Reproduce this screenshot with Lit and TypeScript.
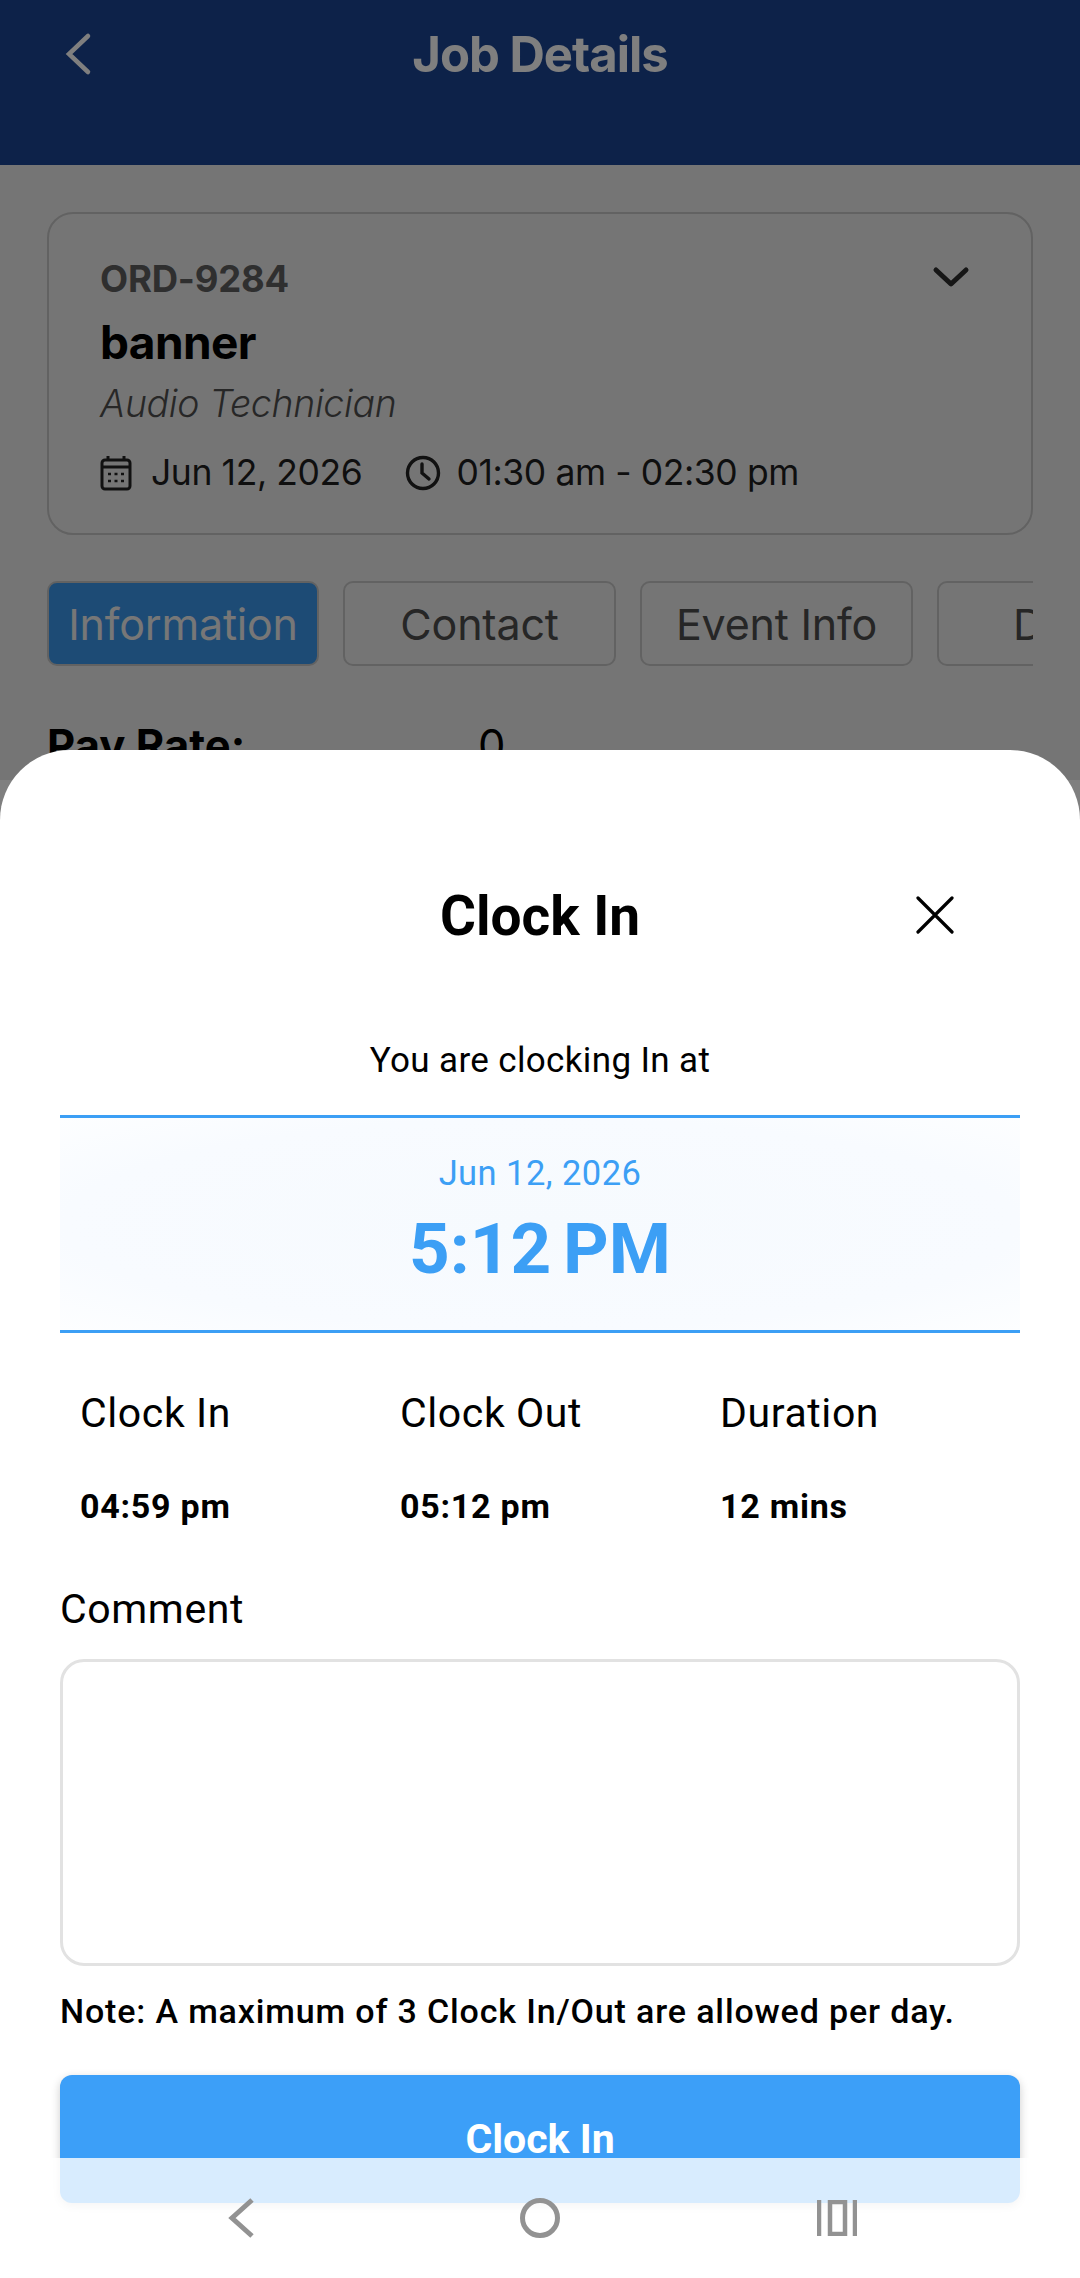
import { LitElement, html, css } from "lit";
import { customElement } from "lit/decorators.js";

@customElement("app-root")
export class AppRoot extends LitElement {
  static styles = css`
    :host { display: block; width: 1080px; height: 2278px; position: relative; overflow: hidden; background: #fff; font-family: Inter, sans-serif; color: #000; }
    * { box-sizing: border-box; }
    .page { height: 780px; overflow: hidden; background: #ebebeb; }
    .header { height: 165px; background: #1a4492; color: #fff; display: flex; position: relative; justify-content: center; }
    .header svg { position: absolute; left: 64px; top: 32px; }
    .title { font-size: 49px; font-weight: 700; line-height: 56px; padding-top: 27px; letter-spacing: -1px; }
    .content { padding: 47px 47px 0; }
    .card { height: 323px; border: 2.5px solid #c4c4c4; border-radius: 26px; padding: 44px 51px 0; position: relative; }
    .card > svg { position: absolute; right: 60px; top: 52px; }
    .ord { font-size: 36.5px; font-weight: 700; color: #5e5e5e; line-height: 42px; letter-spacing: -.2px; }
    .name { font-size: 46px; font-weight: 700; line-height: 56px; margin-top: 14px; letter-spacing: -.6px; }
    .role { font-size: 37.4px; font-style: italic; color: #4f4f4f; line-height: 44px; margin-top: 12px; font-weight: 300; letter-spacing: -.3px; }
    .meta { display: flex; align-items: center; font-size: 35.5px; margin-top: 25px; line-height: 44px; color: #1e1e1e; letter-spacing: -.4px; }
    .meta svg { flex: none; }
    .date { margin: 0 43px 0 19px; }
    .time { margin-left: 15px; }
    .tabs { display: flex; gap: 24px; margin-top: 46px; overflow: hidden; height: 86px; width: 986px; }
    .tab { flex: none; width: 273px; height: 85px; border: 2.5px solid #c4c4c4; border-radius: 10px; font-size: 43px; letter-spacing: -.2px; color: #4c4c4c; display: flex; align-items: center; justify-content: center; white-space: nowrap; }
    .tab.on { width: 272px; background: #3a96ea; color: #eee; }
    .tab.more { width: 200px; justify-content: flex-start; padding-left: 74px; }
    .row { display: flex; margin-top: 52px; font-size: 43.5px; line-height: 52px; }
    .row b { width: 431px; font-weight: 700; }
    .scrim { position: absolute; inset: 0; background: rgba(0,0,0,.5); }
    .sheet { position: absolute; left: 0; right: 0; top: 750px; bottom: 0; background: #fff; border-radius: 70px 70px 0 0; font-family: Roboto, sans-serif; padding: 0 60px; overflow: hidden; }
    .sheet-head { height: 290px; padding-top: 134px; position: relative; text-align: center; font-size: 55px; font-weight: 700; line-height: 64px; }
    .sheet-head svg { position: absolute; right: 66px; top: 146px; }
    .at { text-align: center; font-size: 35px; line-height: 40px; height: 75px; letter-spacing: .35px; padding-top: 1px; }
    .box { height: 218px; border-top: 3px solid #3c9ff5; border-bottom: 3px solid #3c9ff5; text-align: center; color: #3c9ff5; background: radial-gradient(ellipse at center, #f6fafe 0%, #f8fbff 70%, #fdfeff 100%); }
    .box .d { font-size: 34.5px; line-height: 40px; padding-top: 35px; height: 75px; letter-spacing: .45px; }
    .box .t { font-size: 71px; font-weight: 700; line-height: 84px; word-spacing: -6px; margin-top: 14px; }
    .stats { display: grid; grid-template-columns: 320px 320px 1fr; padding: 56px 0 0 20px; }
    .lab { font-size: 41px; line-height: 48px; letter-spacing: .6px; }
    .val { font-size: 34px; font-weight: 700; line-height: 40px; margin-top: 49px; letter-spacing: .75px; }
    .cl { font-size: 41px; line-height: 48px; margin-top: 59px; letter-spacing: .6px; }
    .ta { height: 307px; border: 3px solid #e2e2e2; border-radius: 24px; margin-top: 26px; }
    .note { font-size: 34px; font-weight: 500; line-height: 40px; margin-top: 25px; letter-spacing: .85px; white-space: nowrap; }
    .btn { height: 128px; margin-top: 44px; background: #3c9ff8; color: #fff; border-radius: 12px; text-align: center; font-size: 41px; font-weight: 700; line-height: 48px; padding-top: 40px; box-shadow: 0 3px 10px rgba(0,0,0,.2); }
    .nav { position: absolute; left: 0; right: 0; top: 2158px; bottom: 0; background: rgba(255,255,255,.8); }
    .nav svg { position: absolute; top: 40px; }
    .nav .back { left: 226px; }
    .nav .home { left: 520px; }
    .nav .recent { left: 817px; top: 42px; }
  `;

  render() {
    return html`
      <div class="page">
        <div class="header">
          <svg width="30" height="44" viewBox="0 0 30 44" fill="none" stroke="#fff" stroke-width="4.5" stroke-linecap="round" stroke-linejoin="miter"><path d="M24 4 L5 22 L24 40" /></svg>
          <div class="title">Job Details</div>
        </div>
        <div class="content">
          <div class="card">
            <svg width="40" height="24" viewBox="0 0 40 24" fill="none" stroke="#2c2c2c" stroke-width="5" stroke-linecap="round" stroke-linejoin="round"><path d="M5 4 L20 18 L35 4"/></svg>
            <div class="ord">ORD-9284</div>
            <div class="name">banner</div>
            <div class="role">Audio Technician</div>
            <div class="meta">
              <svg width="32" height="36" viewBox="0 0 32 36" fill="none" stroke="#222" stroke-width="3"><rect x="2" y="5" width="28" height="29" rx="3"/><path d="M2 12H30M8 1V6M24 1V6"/><path d="M8 19h3M14.5 19h3M21 19h3M8 26h3M14.5 26h3M21 26h3" stroke-width="2.6"/></svg>
              <span class="date">Jun 12, 2026</span>
              <svg width="36" height="36" viewBox="0 0 36 36" fill="none" stroke="#222" stroke-width="3.4" stroke-linecap="round"><circle cx="18" cy="18" r="15.5"/><path d="M17 9V18L24 24"/></svg>
              <span class="time">01:30 am - 02:30 pm</span>
            </div>
          </div>
          <div class="tabs">
            <div class="tab on">Information</div>
            <div class="tab">Contact</div>
            <div class="tab">Event Info</div>
            <div class="tab more">D</div>
          </div>
          <div class="row"><b>Pay Rate:</b><span>0</span></div>
        </div>
      </div>
      <div class="scrim"></div>
      <div class="sheet">
        <div class="sheet-head">Clock In
          <svg width="38" height="38" viewBox="0 0 38 38" fill="none" stroke="#000" stroke-width="3.2" stroke-linecap="round"><path d="M2 2L36 36M36 2L2 36"/></svg>
        </div>
        <div class="at">You are clocking In at</div>
        <div class="box">
          <div class="d">Jun 12, 2026</div>
          <div class="t">5:12 PM</div>
        </div>
        <div class="stats">
          <div class="lab">Clock In</div><div class="lab">Clock Out</div><div class="lab">Duration</div>
          <div class="val">04:59 pm</div><div class="val">05:12 pm</div><div class="val">12 mins</div>
        </div>
        <div class="cl">Comment</div>
        <div class="ta"></div>
        <div class="note">Note: A maximum of 3 Clock In/Out are allowed per day.</div>
        <div class="btn">Clock In</div>
      </div>
      <div class="nav">
        <svg class="back" width="30" height="40" viewBox="0 0 30 40" fill="none" stroke="#929292" stroke-width="5"><path d="M26 2L6 20L26 38"/></svg>
        <svg class="home" width="40" height="40" viewBox="0 0 40 40" fill="none" stroke="#929292" stroke-width="5"><circle cx="20" cy="20" r="17.5"/></svg>
        <svg class="recent" width="40" height="36" viewBox="0 0 40 36" fill="none" stroke="#929292" stroke-width="4.5"><path d="M2 0V36M38 0V36"/><rect x="13" y="2" width="15" height="32" /></svg>
      </div>
    `;
  }
}
